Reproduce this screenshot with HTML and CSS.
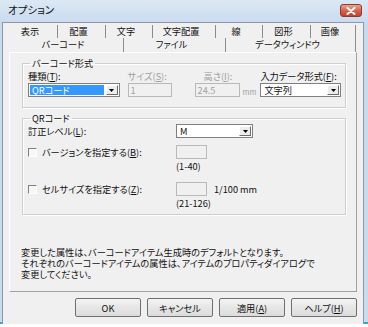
FILE: index.html
```html
<!DOCTYPE html>
<html lang="ja">
<head>
    <meta charset="UTF-8">
    <title>オプション</title>
    <link rel="stylesheet" href="styles.css">
</head>
<body>
    <div class="window">
        <div class="titlebar">
            <span class="title">オプション</span>
            <div class="close">
                <svg width="10" height="8" viewBox="0 0 10 8"><path d="M1.5 1 L8.5 7 M8.5 1 L1.5 7" stroke="#fff" stroke-width="2" stroke-linecap="round"/></svg>
            </div>
        </div>
        <div class="client">
            <div class="tabrow back">
                <div class="tab">表示</div>
                <div class="tab">配置</div>
                <div class="tab">文字</div>
                <div class="tab">文字配置</div>
                <div class="tab">線</div>
                <div class="tab">図形</div>
                <div class="tab">画像</div>
            </div>
            <div class="tabrow front">
                <div class="tab active">バーコード</div>
                <div class="tab">ファイル</div>
                <div class="tab">データウィンドウ</div>
            </div>
            <div class="panel">
                <fieldset class="group format">
                    <legend>バーコード形式</legend>
                    <div class="field kind">
                        <div class="lbl">種類(<u>T</u>):</div>
                        <div class="combo">
                            <span class="value selected">QRコード</span>
                            <span class="arrow"><svg width="5" height="3" viewBox="0 0 5 3"><path d="M0 0 H5 L2.5 3 Z" fill="#000"/></svg></span>
                        </div>
                    </div>
                    <div class="field size">
                        <div class="lbl off">サイズ(<u>S</u>):</div>
                        <div class="input off">1</div>
                    </div>
                    <div class="field height">
                        <div class="lbl off indent">高さ(<u>I</u>):</div>
                        <div class="inline">
                            <div class="input off">24.5</div>
                            <span class="unit off">mm</span>
                        </div>
                    </div>
                    <div class="field datatype">
                        <div class="lbl">入力データ形式(<u>F</u>):</div>
                        <div class="combo">
                            <span class="value">文字列</span>
                            <span class="arrow"><svg width="5" height="3" viewBox="0 0 5 3"><path d="M0 0 H5 L2.5 3 Z" fill="#000"/></svg></span>
                        </div>
                    </div>
                </fieldset>

                <fieldset class="group qr">
                    <legend>QRコード</legend>
                    <div class="row">
                        <div class="rlabel">訂正レベル(<u>L</u>):</div>
                        <div class="combo level">
                            <span class="value">M</span>
                            <span class="arrow"><svg width="5" height="3" viewBox="0 0 5 3"><path d="M0 0 H5 L2.5 3 Z" fill="#000"/></svg></span>
                        </div>
                    </div>
                    <div class="row gap1">
                        <div class="rlabel"><span class="check"></span>バージョンを指定する(<u>B</u>):</div>
                        <div class="input off small"></div>
                    </div>
                    <div class="hint">(1-40)</div>
                    <div class="row gap2">
                        <div class="rlabel"><span class="check"></span>セルサイズを指定する(<u>Z</u>):</div>
                        <div class="input off small"></div>
                        <span class="unit2">1/100 mm</span>
                    </div>
                    <div class="hint">(21-126)</div>
                </fieldset>

                <p class="note">変更した属性は、バーコードアイテム生成時のデフォルトとなります。<br>それぞれのバーコードアイテムの属性は、アイテムのプロパティダイアログで<br>変更してください。</p>
            </div>
            <div class="buttons">
                <button class="btn">OK</button>
                <button class="btn">キャンセル</button>
                <button class="btn">適用(<u>A</u>)</button>
                <button class="btn">ヘルプ(<u>H</u>)</button>
            </div>
        </div>
    </div>
</body>
</html>
```

FILE: styles.css
```css
* {
    box-sizing: border-box;
}
body {
    margin: 0;
    background: #fff;
    font-family: 'Noto Sans CJK JP', 'Liberation Sans', sans-serif;
    font-size: 9.2px;
    font-feature-settings: "palt";
    color: #111;
}
.window {
    width: 368px;
    height: 324px;
    padding: 0 4px 0 2px;
    background: linear-gradient(#dce8f5, #c8daee 24px, #c9dbef);
    border-bottom: 2px solid #35a7cf;
}
.titlebar {
    height: 22px;
    display: flex;
    justify-content: space-between;
    align-items: flex-start;
    padding: 0 2px 0 6px;
}
.title {
    font-size: 10.5px;
    line-height: 20px;
}
.close {
    width: 22px;
    height: 13px;
    margin-top: 4px;
    border: 1px solid #8e3a2c;
    border-radius: 3px;
    background: linear-gradient(#e9a593, #d8644c 50%, #c6402a);
    display: flex;
    align-items: center;
    justify-content: center;
}
.client {
    height: 302px;
    background: #f0f0f0;
    border: 1px solid #8d99a8;
    border-bottom: none;
    padding: 2px 6px 0 6px;
}

/* tabs */
.tabrow {
    display: grid;
    height: 13px;
}
.tabrow.back {
    grid-template-columns: 49px 48px 47px 63px 47px 48px 45px;
}
.tabrow.front {
    height: 14px;
    grid-template-columns: 115px 102px 130px;
}
.tab {
    border-right: 1px solid #8c8c8c;
    text-align: center;
    line-height: 13px;
    padding-right: 6px;
    white-space: nowrap;
}
.panel {
    height: 240px;
    border: 1px solid #a0a0a0;
    border-top-color: #fff;
    border-left-color: #fff;
    padding: 4px 10px 0 12px;
}

/* group boxes */
.group {
    margin: 0;
    border: 1px solid #cfcfcf;
    box-shadow: inset 1px 1px 0 #fff, 1px 1px 0 #fff;
    padding: 0 4px 0 5px;
    min-width: 0;
}
.group legend {
    padding: 0 2px;
    margin-left: 2px;
    line-height: 12px;
}
.format {
    display: flex;
    height: 51px;
    padding-top: 1px;
}
.lbl {
    line-height: 12px;
    height: 13px;
    white-space: nowrap;
}
.lbl.indent {
    padding-left: 9px;
}
.off {
    color: #a0a0a0;
}
.kind {
    width: 92px;
}
.size {
    margin-left: 8px;
    width: 44px;
}
.height {
    margin-left: 23px;
}
.datatype {
    margin-left: 4px;
    width: 81px;
}
.inline {
    display: flex;
    align-items: flex-end;
    gap: 3px;
}
.unit {
    font-size: 7.5px;
    line-height: 10px;
}
.combo {
    height: 14px;
    border: 1px solid #7f7f7f;
    background: #fff;
    display: flex;
    align-items: center;
    padding: 1px;
}
.combo .value {
    flex: 1;
    height: 10px;
    line-height: 10px;
    padding-left: 2px;
    white-space: nowrap;
}
.combo .value.selected {
    background: #3399ff;
    color: #fff;
    margin-right: 2px;
}
.arrow {
    width: 12px;
    height: 10px;
    border: 1px solid;
    border-color: #fff #6d6d6d #6d6d6d #fff;
    background: #ececec;
    display: flex;
    align-items: center;
    justify-content: center;
}
.input {
    height: 14px;
    width: 45px;
    border: 1px solid #b9b9b9;
    background: #f0f0f0;
    line-height: 12px;
    padding-left: 2px;
}
.size .input {
    width: 44px;
}
.input.small {
    width: 31px;
}

/* QR group */
.qr {
    margin-top: 4px;
    height: 103px;
}
.row {
    display: flex;
    align-items: center;
    height: 14px;
}
.row.gap1 {
    margin-top: 7px;
}
.row.gap2 {
    margin-top: 10px;
}
.rlabel {
    width: 148px;
    display: flex;
    align-items: center;
    white-space: nowrap;
}
.check {
    width: 9px;
    height: 9px;
    border: 1px solid;
    border-color: #808080 #fff #fff #808080;
    background: #f7f7f7;
    margin-right: 5px;
}
.level {
    width: 77px;
}
.unit2 {
    margin-left: 7px;
}
.hint {
    padding-left: 148px;
    line-height: 12px;
    margin-top: 1px;
}
.note {
    margin: 32px 0 0 -1px;
    line-height: 11px;
}

/* dialog buttons */
.buttons {
    display: flex;
    justify-content: flex-end;
    gap: 6px;
    margin-top: 6px;
}
.btn {
    width: 66px;
    height: 19px;
    padding: 0;
    font: inherit;
    color: #111;
    font-feature-settings: "palt";
    border: 1px solid #707070;
    border-radius: 2px;
    background: linear-gradient(#f4f4f4, #e6e6e6 50%, #dcdcdc);
}
```
